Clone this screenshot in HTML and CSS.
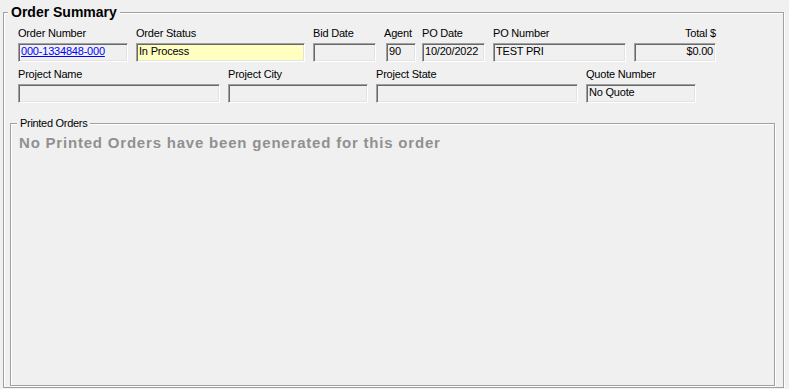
FILE: index.html
```html
<!DOCTYPE html>
<html lang="en">
<head>
  <meta charset="UTF-8">
  <title>Order Summary</title>
  <link rel="stylesheet" href="styles.css">
</head>
<body>
  <div class="group summary">
    <div class="group-title">Order Summary</div>

    <div class="row row-top">
      <div class="field w-110">
        <label>Order Number</label>
        <div class="box"><a href="#" class="order-link">000-1334848-000</a></div>
      </div>
      <div class="field w-169">
        <label>Order Status</label>
        <div class="box box-yellow">In Process</div>
      </div>
      <div class="field w-63">
        <label>Bid Date</label>
        <div class="box"></div>
      </div>
      <div class="field w-30 field-agent">
        <label>Agent</label>
        <div class="box">90</div>
      </div>
      <div class="field w-63 field-podate">
        <label>PO Date</label>
        <div class="box">10/20/2022</div>
      </div>
      <div class="field w-133">
        <label>PO Number</label>
        <div class="box">TEST PRI</div>
      </div>
      <div class="field w-82 field-right">
        <label>Total $</label>
        <div class="box">$0.00</div>
      </div>
    </div>

    <div class="row row-second">
      <div class="field w-202">
        <label>Project Name</label>
        <div class="box"></div>
      </div>
      <div class="field w-140">
        <label>Project City</label>
        <div class="box"></div>
      </div>
      <div class="field w-202">
        <label>Project State</label>
        <div class="box"></div>
      </div>
      <div class="field w-110">
        <label>Quote Number</label>
        <div class="box">No Quote</div>
      </div>
    </div>

    <div class="group printed">
      <div class="printed-title">Printed Orders</div>
      <p class="empty-msg">No Printed Orders have been generated for this order</p>
    </div>
  </div>
</body>
</html>
```

FILE: styles.css
```css
body {
  margin: 0;
  background: #f0f0f0;
  font-family: "Liberation Sans", Arial, sans-serif;
  font-size: 11px;
  color: #000;
}

.group {
  box-sizing: border-box;
  border: 1px solid #a0a0a0;
  box-shadow: inset 1px 1px #fff, 1px 1px #fff;
}

.summary {
  margin: 12px 0 0 3px;
  width: 781px;
  height: 376px;
  padding-left: 6px;
}

.group-title {
  width: fit-content;
  margin: -9px 0 0 -2px;
  padding: 0 3px;
  background: #f0f0f0;
  font-size: 14px;
  font-weight: bold;
  line-height: 16px;
}

.row {
  display: flex;
  gap: 8px;
  padding-left: 8px;
}

.row-top {
  margin-top: 7px;
}

.row-second {
  margin-top: 6px;
}

.field {
  display: flex;
  flex-direction: column;
}

.field label {
  line-height: 13px;
  margin-bottom: 3px;
  letter-spacing: -0.2px;
  white-space: nowrap;
}

.field-agent {
  margin-left: 2px;
}

.field-agent label {
  margin-left: -2px;
}

.field-podate {
  margin-left: -2px;
}

.field-right label,
.field-right .box {
  text-align: right;
}

.field-right .box {
  padding: 1px 2px 0 0;
}

.w-30 { width: 30px; }
.w-63 { width: 63px; }
.w-82 { width: 82px; }
.w-110 { width: 110px; }
.w-133 { width: 133px; }
.w-140 { width: 140px; }
.w-169 { width: 169px; }
.w-202 { width: 202px; }

.box {
  box-sizing: border-box;
  height: 19px;
  padding: 1px 0 0 2px;
  border: 1px solid;
  border-color: #a0a0a0 #fff #fff #a0a0a0;
  box-shadow: inset 1px 1px #696969, inset -1px -1px #e3e3e3;
  background: #f0f0f0;
  line-height: 13px;
  letter-spacing: -0.2px;
  white-space: nowrap;
  overflow: hidden;
}

.box-yellow {
  background: #ffffc0;
}

.order-link {
  color: #0000ff;
  text-decoration: underline;
}

.printed {
  width: 765px;
  height: 263px;
  margin-top: 20px;
}

.printed-title {
  width: fit-content;
  margin: -7px 0 0 6px;
  padding: 0 3px;
  background: #f0f0f0;
  line-height: 13px;
  letter-spacing: -0.3px;
}

.empty-msg {
  margin: 4px 0 0 8px;
  font-size: 15px;
  font-weight: bold;
  line-height: 17px;
  letter-spacing: 0.8px;
  color: #909090;
}
```
